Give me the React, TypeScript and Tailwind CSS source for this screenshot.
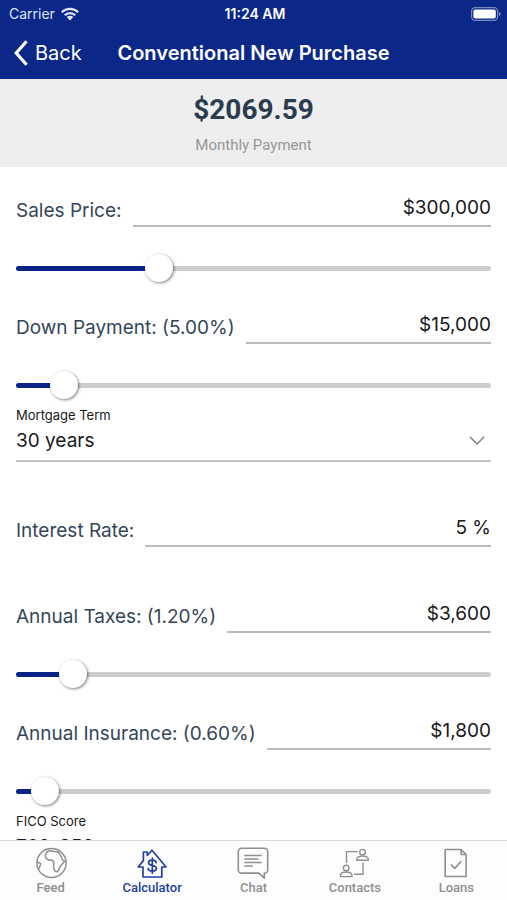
import { useState, type ReactNode } from "react";

type AmountFieldProps = {
  id: string;
  label: string;
  initial: string;
  percent?: number;
};

function WifiIcon() {
  return (
    <svg viewBox="0 0 18 14" className="h-[14px] w-[18px]" aria-hidden="true">
      <g fill="none" stroke="currentColor" strokeWidth="2.3">
        <path d="M0.8 5.3a11.6 11.6 0 0 1 16.4 0" />
        <path d="M3.7 8.3a7.5 7.5 0 0 1 10.6 0" />
      </g>
      <path d="M9 13.4 5.7 10.1a4.7 4.7 0 0 1 6.6 0z" fill="currentColor" />
    </svg>
  );
}

function BatteryIcon() {
  return (
    <svg viewBox="0 0 30 14" className="h-[14px] w-[30px]" aria-hidden="true">
      <rect x="0.6" y="0.6" width="26" height="12.8" rx="3.6" fill="none" stroke="currentColor" strokeOpacity="0.45" strokeWidth="1.2" />
      <rect x="2.4" y="2.4" width="22.4" height="9.2" rx="2" fill="currentColor" />
      <path d="M28 4.8q3.4 2.2 0 4.4z" fill="currentColor" fillOpacity="0.5" />
    </svg>
  );
}

function FeedIcon() {
  return (
    <svg viewBox="0 0 32 32" className="h-8 w-8" fill="none" stroke="currentColor" strokeWidth="1.5" strokeLinejoin="round" aria-hidden="true">
      <circle cx="16.5" cy="16" r="14.6" />
      <path d="M14.6 3.4 11.8 5 10.3 8.2l.5 3 2.8 2 3.6-.2 1.7 2.4-.3 4.2.9 4 2 1.2 1.6-.8 1.5-3 1.6-2.8 3.4-4-2-1-2-5-2.6-3.4-3.8-.2z" />
      <path d="M2.2 15.2 5.8 16.4 4.8 19.6 3.6 22" />
    </svg>
  );
}

function CalculatorIcon() {
  return (
    <svg viewBox="0 0 32 32" className="h-8 w-8" fill="none" stroke="currentColor" strokeWidth="1.7" strokeLinejoin="round" aria-hidden="true">
      <path d="M7 30V20H2.2L7.4 13.6V5h3.9v3.5L16 3.2 30 20h-4.2v10z" />
      <path d="M20.2 15.6c-.3-1.5-1.7-2.4-3.9-2.4s-3.8.9-3.8 2.6c0 3.7 8 1.7 8 5.5 0 1.8-1.7 2.8-4.1 2.8s-4.1-1-4.3-2.7M16.3 11v15.2" strokeLinecap="round" />
    </svg>
  );
}

function ChatIcon() {
  return (
    <svg viewBox="0 0 32 32" className="h-8 w-8" fill="none" stroke="currentColor" strokeWidth="1.6" strokeLinejoin="round" aria-hidden="true">
      <path d="M4.7 1.3h22.6a3.4 3.4 0 0 1 3.4 3.4v18a3.4 3.4 0 0 1-3.4 3.4v5.1l-5.4-5.1H4.7a3.4 3.4 0 0 1-3.4-3.4v-18a3.4 3.4 0 0 1 3.4-3.4z" />
      <path d="M7.3 8.5h17.4M7.3 12h14.2M7.3 15.5h17.4M7.3 19h8.4" />
    </svg>
  );
}

function ContactsIcon() {
  return (
    <svg viewBox="0 0 32 32" className="h-8 w-8" fill="none" stroke="currentColor" strokeWidth="1.4" strokeLinejoin="round" aria-hidden="true">
      <circle cx="23.5" cy="5.2" r="2.8" />
      <path d="M17.7 13.2v-.9c0-2 2.4-3.2 5.8-3.2s5.8 1.2 5.8 3.2v.9z" />
      <circle cx="7.2" cy="21" r="2.8" />
      <path d="M1.4 29.6v-1.1c0-2.1 2.4-3.5 5.8-3.5s5.8 1.4 5.8 3.5v1.1z" />
      <path d="M18.8 4.6H7.5V16M15 27.2h9V15.5" />
    </svg>
  );
}

function LoansIcon() {
  return (
    <svg viewBox="0 0 32 32" className="h-8 w-8" fill="none" stroke="currentColor" strokeWidth="1.6" strokeLinejoin="round" aria-hidden="true">
      <path d="M5.2 2.5h15.9l5 5v22H5.2zM21.1 2.5v5h5" />
      <path d="m11 17.6 3.8 3.8 6.4-7.2" />
    </svg>
  );
}

const TABS: { name: string; icon: ReactNode }[] = [
  { name: "Feed", icon: <FeedIcon /> },
  { name: "Calculator", icon: <CalculatorIcon /> },
  { name: "Chat", icon: <ChatIcon /> },
  { name: "Contacts", icon: <ContactsIcon /> },
  { name: "Loans", icon: <LoansIcon /> },
];

function AmountField({ id, label, initial, percent }: AmountFieldProps) {
  const [amount, setAmount] = useState(initial);
  const [position, setPosition] = useState(percent ?? 0);

  return (
    <div>
      <div className="flex h-9 items-end gap-[11px]">
        <label htmlFor={id} className="shrink-0 text-[19px] leading-8 text-[#34465a]">
          {label}
        </label>
        <input
          id={id}
          value={amount}
          onChange={(e) => setAmount(e.target.value)}
          className="h-9 min-w-0 flex-1 border-b-2 border-[#bdbdbd] pb-[2px] text-right text-[19px] text-[#181818] outline-none"
        />
      </div>
      {percent !== undefined && (
        <div className="mt-[27px] grid h-7 items-center">
          <div className="col-start-1 row-start-1 h-[5px] overflow-hidden rounded-full bg-[#cdcdcd]">
            <div className="h-full bg-[#0a2387]" style={{ width: `${position}%` }} />
          </div>
          {/* the input overhangs by half a thumb so the thumb centre meets the bar's ends */}
          <input
            type="range"
            aria-label={`${label} slider`}
            value={position}
            onChange={(e) => setPosition(Number(e.target.value))}
            className="col-start-1 row-start-1 -mx-[14px] h-7 cursor-pointer appearance-none bg-transparent outline-none [&::-webkit-slider-thumb]:size-7 [&::-webkit-slider-thumb]:appearance-none [&::-webkit-slider-thumb]:rounded-full [&::-webkit-slider-thumb]:bg-white [&::-webkit-slider-thumb]:shadow-[1px_1px_3px_rgba(0,0,0,0.5)]"
          />
        </div>
      )}
    </div>
  );
}

function SelectField({ id, label, options }: { id: string; label: string; options: string[] }) {
  return (
    <div>
      <label htmlFor={id} className="block text-[13px] leading-5 text-[#181818]">
        {label}
      </label>
      <div className="grid items-center border-b-2 border-[#c3c3c3]">
        <select id={id} className="col-start-1 row-start-1 h-[35px] appearance-none pb-[3px] text-[19px] text-[#181818] outline-none">
          {options.map((option) => (
            <option key={option}>{option}</option>
          ))}
        </select>
        <svg
          viewBox="0 0 16 9"
          className="pointer-events-none col-start-1 row-start-1 mr-[6px] mb-1 h-[9px] w-4 justify-self-end text-[#858585]"
          fill="none"
          stroke="currentColor"
          strokeWidth="1.5"
          aria-hidden="true"
        >
          <path d="m0.8 0.8 7.2 7.2 7.2-7.2" />
        </svg>
      </div>
    </div>
  );
}

export default function App() {
  const [active, setActive] = useState("Calculator");

  return (
    <div className="flex h-screen flex-col bg-white font-[Inter,sans-serif]">
      <header className="bg-[#0b2889] text-white">
        <div className="grid h-[27px] grid-cols-3 items-center pr-[6px] pl-[9px] text-sm">
          <div className="flex items-center gap-[6px] text-[#dfe4f5]">
            Carrier
            <WifiIcon />
          </div>
          <time className="text-center font-semibold">11:24 AM</time>
          <div className="flex justify-end">
            <BatteryIcon />
          </div>
        </div>
        <div className="grid h-[52px] grid-cols-[1fr_auto_1fr] items-center px-[14px]">
          <button type="button" className="flex items-center gap-[7px] justify-self-start text-xl">
            <svg viewBox="0 0 14 26" className="h-[26px] w-[14px]" fill="none" stroke="currentColor" strokeWidth="3.2" aria-hidden="true">
              <path d="M12.6 1.2 2.2 13l10.4 11.8" />
            </svg>
            Back
          </button>
          <h1 className="text-xl font-semibold">Conventional New Purchase</h1>
        </div>
      </header>

      <section className="flex h-[88px] shrink-0 flex-col items-center bg-[#eeeeee] pt-[13px]">
        <p className="font-[Roboto,sans-serif] text-[28px] leading-9 font-bold text-[#2b3c4e]">$2069.59</p>
        <p className="mt-[7px] font-[Roboto,sans-serif] text-[15px] leading-5 text-[#979797]">Monthly Payment</p>
      </section>

      <main className="min-h-0 flex-1 overflow-y-auto px-4 pt-6 [scrollbar-width:none]">
        <AmountField id="price" label="Sales Price:" initial="$300,000" percent={30} />
        <div className="mt-[26px]">
          <AmountField id="down" label="Down Payment: (5.00%)" initial="$15,000" percent={10} />
        </div>
        <div className="mt-[6px]">
          <SelectField id="term" label="Mortgage Term" options={["30 years", "20 years", "15 years"]} />
        </div>
        <div className="mt-[49px]">
          <AmountField id="rate" label="Interest Rate:" initial="5 %" />
        </div>
        <div className="mt-[50px]">
          <AmountField id="taxes" label="Annual Taxes: (1.20%)" initial="$3,600" percent={12} />
        </div>
        <div className="mt-[26px]">
          <AmountField id="insurance" label="Annual Insurance: (0.60%)" initial="$1,800" percent={6} />
        </div>
        <div className="mt-[6px]">
          <SelectField id="fico" label="FICO Score" options={["760-850", "700-759", "640-699"]} />
        </div>
      </main>

      <nav className="grid h-[60px] shrink-0 grid-cols-5 border-t border-[#d8d8d8] bg-[#fdfdfd] font-[Roboto,sans-serif]">
        {TABS.map((tab) => (
          <button
            key={tab.name}
            type="button"
            onClick={() => setActive(tab.name)}
            className={`flex flex-col items-center pt-[6px] text-[13px] leading-[18px] font-medium ${
              active === tab.name ? "text-[#24409c]" : "text-[#8f8f8f]"
            }`}
          >
            {tab.icon}
            {tab.name}
          </button>
        ))}
      </nav>
    </div>
  );
}
